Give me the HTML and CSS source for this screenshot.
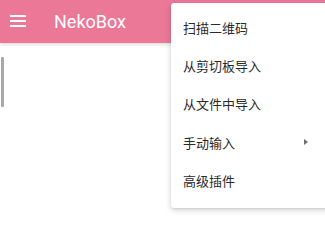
FILE: index.html
```html
<!DOCTYPE html>
<html>
<head>
<meta charset="utf-8">
<link rel="stylesheet" href="styles.css">
</head>
<body>
<div class="app">
  <header class="appbar">
    <svg class="menu-icon" width="16" height="12" viewBox="0 0 16 12">
      <rect x="0" y="0" width="16" height="2" fill="#fff"/>
      <rect x="0" y="5" width="16" height="2" fill="#fff"/>
      <rect x="0" y="10" width="16" height="2" fill="#fff"/>
    </svg>
    <span class="title">NekoBox</span>
  </header>
  <div class="content">
    <div class="scrollbar"></div>
  </div>
  <ul class="popup">
    <li class="item">扫描二维码</li>
    <li class="item">从剪切板导入</li>
    <li class="item">从文件中导入</li>
    <li class="item sub">手动输入<span class="arrow"></span></li>
    <li class="item">高级插件</li>
  </ul>
</div>
</body>
</html>
```
FILE: styles.css
```css
html, body {
  margin: 0;
  padding: 0;
  background: #fff;
}
.app {
  position: relative;
  width: 325px;
  height: 238px;
  overflow: hidden;
  font-family: Roboto, "Noto Sans CJK SC", sans-serif;
}
.appbar {
  height: 43px;
  background: #ec7898;
  display: flex;
  align-items: center;
  box-shadow: 0 1px 4px rgba(0,0,0,0.18);
  position: relative;
  z-index: 1;
}
.menu-icon {
  margin-left: 10px;
  margin-top: -1px;
}
.title {
  margin-left: 28px;
  color: #fff;
  font-size: 18px;
  font-weight: 400;
  margin-top: -1px;
}
.content {
  padding-top: 14px;
}
.scrollbar {
  margin-left: 1px;
  width: 3px;
  height: 50px;
  background: #a8a8a8;
  border-radius: 1px;
}
.popup {
  position: absolute;
  left: 171px;
  top: 3px;
  width: 170px;
  margin: 0;
  padding: 5px 0 8px;
  list-style: none;
  background: #fff;
  border-radius: 3px;
  box-shadow: 0 2px 6px rgba(0,0,0,0.18), 0 1px 2px rgba(0,0,0,0.08);
  z-index: 2;
}
.item {
  height: 38.4px;
  display: flex;
  align-items: center;
  padding-left: 12px;
  font-size: 13px;
  color: #2a2a2a;
  position: relative;
}
.arrow {
  position: absolute;
  left: 133px;
  top: 16px;
  width: 0;
  height: 0;
  border-top: 3.5px solid transparent;
  border-bottom: 3.5px solid transparent;
  border-left: 4px solid #707070;
}
```
